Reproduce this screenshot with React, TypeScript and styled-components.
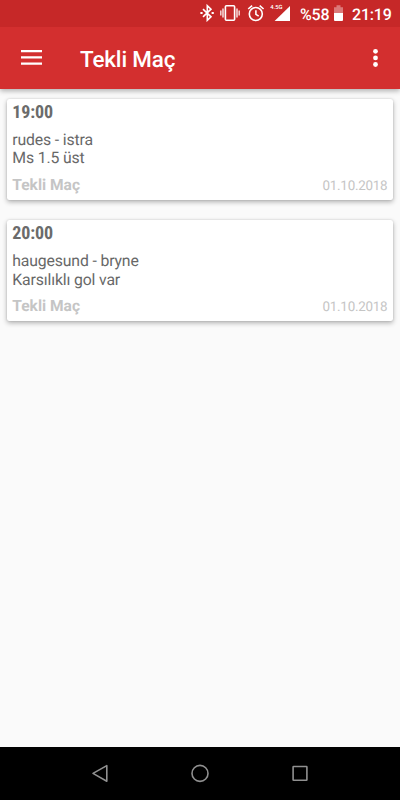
import React from "react";
import styled, { createGlobalStyle } from "styled-components";

const GlobalStyle = createGlobalStyle`
  * { box-sizing: border-box; }
  body {
    margin: 0;
    background: #fafafa;
    font-family: Roboto, sans-serif;
    text-rendering: geometricPrecision;
  }
`;

const Screen = styled.div`
  display: flex;
  flex-direction: column;
  width: 400px;
  height: 800px;
  overflow: hidden;
  background: #fafafa;
`;

const Header = styled.header`
  flex: none;
  height: 88.7px;
  background: #d32f2f;
  box-shadow: 0 2px 5px rgba(0, 0, 0, 0.3);
`;

const StatusBar = styled.div`
  display: flex;
  align-items: center;
  justify-content: flex-end;
  height: 26.7px;
  padding-right: 9px;
  background: #c62828;
  color: #fff;
`;

const StatusIcon = styled.svg<{ $gap: number }>`
  flex: none;
  display: block;
  margin-right: ${(p) => p.$gap}px;
`;

const StatusText = styled.span<{ $width: number; $gap?: number }>`
  width: ${(p) => p.$width}px;
  margin-right: ${(p) => p.$gap ?? 0}px;
  padding-top: 3px;
  font-size: 16px;
  line-height: 20px;
  font-weight: 500;
  letter-spacing: -0.2px;
  white-space: nowrap;
`;

const Toolbar = styled.div`
  display: flex;
  align-items: center;
  height: 62px;
  padding: 0 20px 0 21px;
`;

const Title = styled.h1`
  flex: 1;
  margin: 4px 0 0 38px;
  color: #fff;
  font-size: 22.4px;
  line-height: 26px;
  font-weight: 500;
  letter-spacing: -0.15px;
`;

const IconButton = styled.button`
  display: flex;
  padding: 0;
  border: 0;
  background: none;
`;

const List = styled.main`
  flex: 1;
  display: flex;
  flex-direction: column;
  gap: 20px;
  padding: 10px 6.7px;
`;

const Card = styled.article`
  height: 101.3px;
  padding: 3px 6px 0 5.6px;
  border-radius: 2.2px;
  background: #fff;
  box-shadow: 0 2px 5px rgba(0, 0, 0, 0.3), 0 0 2px rgba(0, 0, 0, 0.14);
`;

const Time = styled.div`
  width: max-content;
  height: 22px;
  color: #6b6b6b;
  font-family: "Roboto Condensed", Roboto, sans-serif;
  font-stretch: 75%;
  font-size: 18px;
  line-height: 22px;
  font-weight: 700;
  letter-spacing: -0.1px;
`;

const Details = styled.p`
  margin: 7.5px 0 0;
  color: #686868;
  font-size: 15.8px;
  line-height: 18.2px;
  letter-spacing: -0.15px;
  white-space: pre-line;
`;

const CardFooter = styled.div`
  display: flex;
  align-items: baseline;
  justify-content: space-between;
  margin-top: 8px;
  color: #c5c5c5;
  line-height: 19px;
`;

const Category = styled.span`
  font-size: 15.55px;
  font-weight: 700;
`;

const DateLabel = styled.time`
  padding-top: 1px;
  font-size: 13.4px;
  letter-spacing: -0.25px;
`;

const NavBar = styled.nav`
  flex: none;
  display: flex;
  justify-content: center;
  align-items: center;
  gap: 76px;
  height: 53.3px;
  background: #000;
`;

const matches = [
  { time: "19:00", details: "rudes - istra\nMs 1.5 üst", category: "Tekli Maç", date: "01.10.2018" },
  { time: "20:00", details: "haugesund - bryne\nKarsılıklı gol var", category: "Tekli Maç", date: "01.10.2018" },
];

export default function App() {
  return (
    <Screen>
      <GlobalStyle />
      <Header>
        <StatusBar>
          <StatusIcon $gap={5} width="15" height="18" viewBox="0 0 15 18" fill="none" stroke="#fff" strokeWidth="1.6">
            <path d="M3 5.2l8 7.6-3.7 3.5V1.7L11 5.2l-8 7.6" />
            <path d="M.4 9h2.2M11.6 9h2.2" strokeWidth="2" />
          </StatusIcon>
          <StatusIcon $gap={7} width="20" height="18" viewBox="0 0 20 18" fill="none" stroke="#fff">
            <rect x="5.4" y="1.7" width="9.2" height="14.6" rx="1" strokeWidth="1.6" />
            <path d="M3 4.6v8.8M17 4.6v8.8" strokeWidth="1.6" opacity=".8" />
            <path d="M.8 6.5v5M19.2 6.5v5" strokeWidth="1.5" opacity=".8" />
          </StatusIcon>
          <StatusIcon $gap={5} width="18" height="18" viewBox="0 0 18 18" fill="none" stroke="#fff" strokeWidth="1.6">
            <circle cx="8.8" cy="10" r="6.5" />
            <path d="M1.2 5l3.9-3.4M12.7 1.6L16.6 5M8.9 6.2v4.2l2.8 1.8" />
          </StatusIcon>
          <StatusIcon $gap={10} width="20" height="20" viewBox="0 0 20 20" fill="#fff">
            <path d="M20 3v15H4.6z" />
            <text x="0.2" y="5.6" fontSize="5.8" fontWeight="500" fontFamily="Roboto, sans-serif" textLength="12.2">
              4.5G
            </text>
          </StatusIcon>
          <StatusText $width={29} $gap={5}>%58</StatusText>
          <StatusIcon $gap={9} width="9" height="18" viewBox="0 0 9 18">
            <path d="M2.5 1.2h4v2h-4zM0 3.2h9V9H0z" fill="#dc7979" />
            <path d="M0 9h9v7a1 1 0 0 1-1 1H1a1 1 0 0 1-1-1z" fill="#fff" />
          </StatusIcon>
          <StatusText $width={39}>21:19</StatusText>
        </StatusBar>
        <Toolbar>
          <IconButton aria-label="Menu">
            <svg width="21" height="16" viewBox="0 0 21 16" fill="#fff">
              <path d="M0 0h21v2.2H0zM0 6.2h21v2.2H0zM0 12.6h21v2.2H0z" />
            </svg>
          </IconButton>
          <Title>Tekli Maç</Title>
          <IconButton aria-label="More options">
            <svg width="9" height="20" viewBox="0 0 9 20" fill="#fff">
              <circle cx="4.5" cy="3.3" r="2.4" />
              <circle cx="4.5" cy="9.9" r="2.4" />
              <circle cx="4.5" cy="16.5" r="2.4" />
            </svg>
          </IconButton>
        </Toolbar>
      </Header>
      <List>
        {matches.map((match) => (
          <Card key={match.time}>
            <Time>{match.time}</Time>
            <Details>{match.details}</Details>
            <CardFooter>
              <Category>{match.category}</Category>
              <DateLabel>{match.date}</DateLabel>
            </CardFooter>
          </Card>
        ))}
      </List>
      <NavBar>
        <IconButton aria-label="Back">
          <svg width="24" height="24" viewBox="0 0 24 24" fill="none" stroke="#909090" strokeWidth="1.6">
            <path d="M18.8 4.6v15.6L5 12.4z" strokeLinejoin="round" />
          </svg>
        </IconButton>
        <IconButton aria-label="Home">
          <svg width="24" height="24" viewBox="0 0 24 24" fill="none" stroke="#909090" strokeWidth="1.6">
            <circle cx="12" cy="12.4" r="8" />
          </svg>
        </IconButton>
        <IconButton aria-label="Recent apps">
          <svg width="24" height="24" viewBox="0 0 24 24" fill="none" stroke="#909090" strokeWidth="1.6">
            <rect x="5.1" y="5.5" width="13.8" height="13.8" rx=".5" />
          </svg>
        </IconButton>
      </NavBar>
    </Screen>
  );
}
